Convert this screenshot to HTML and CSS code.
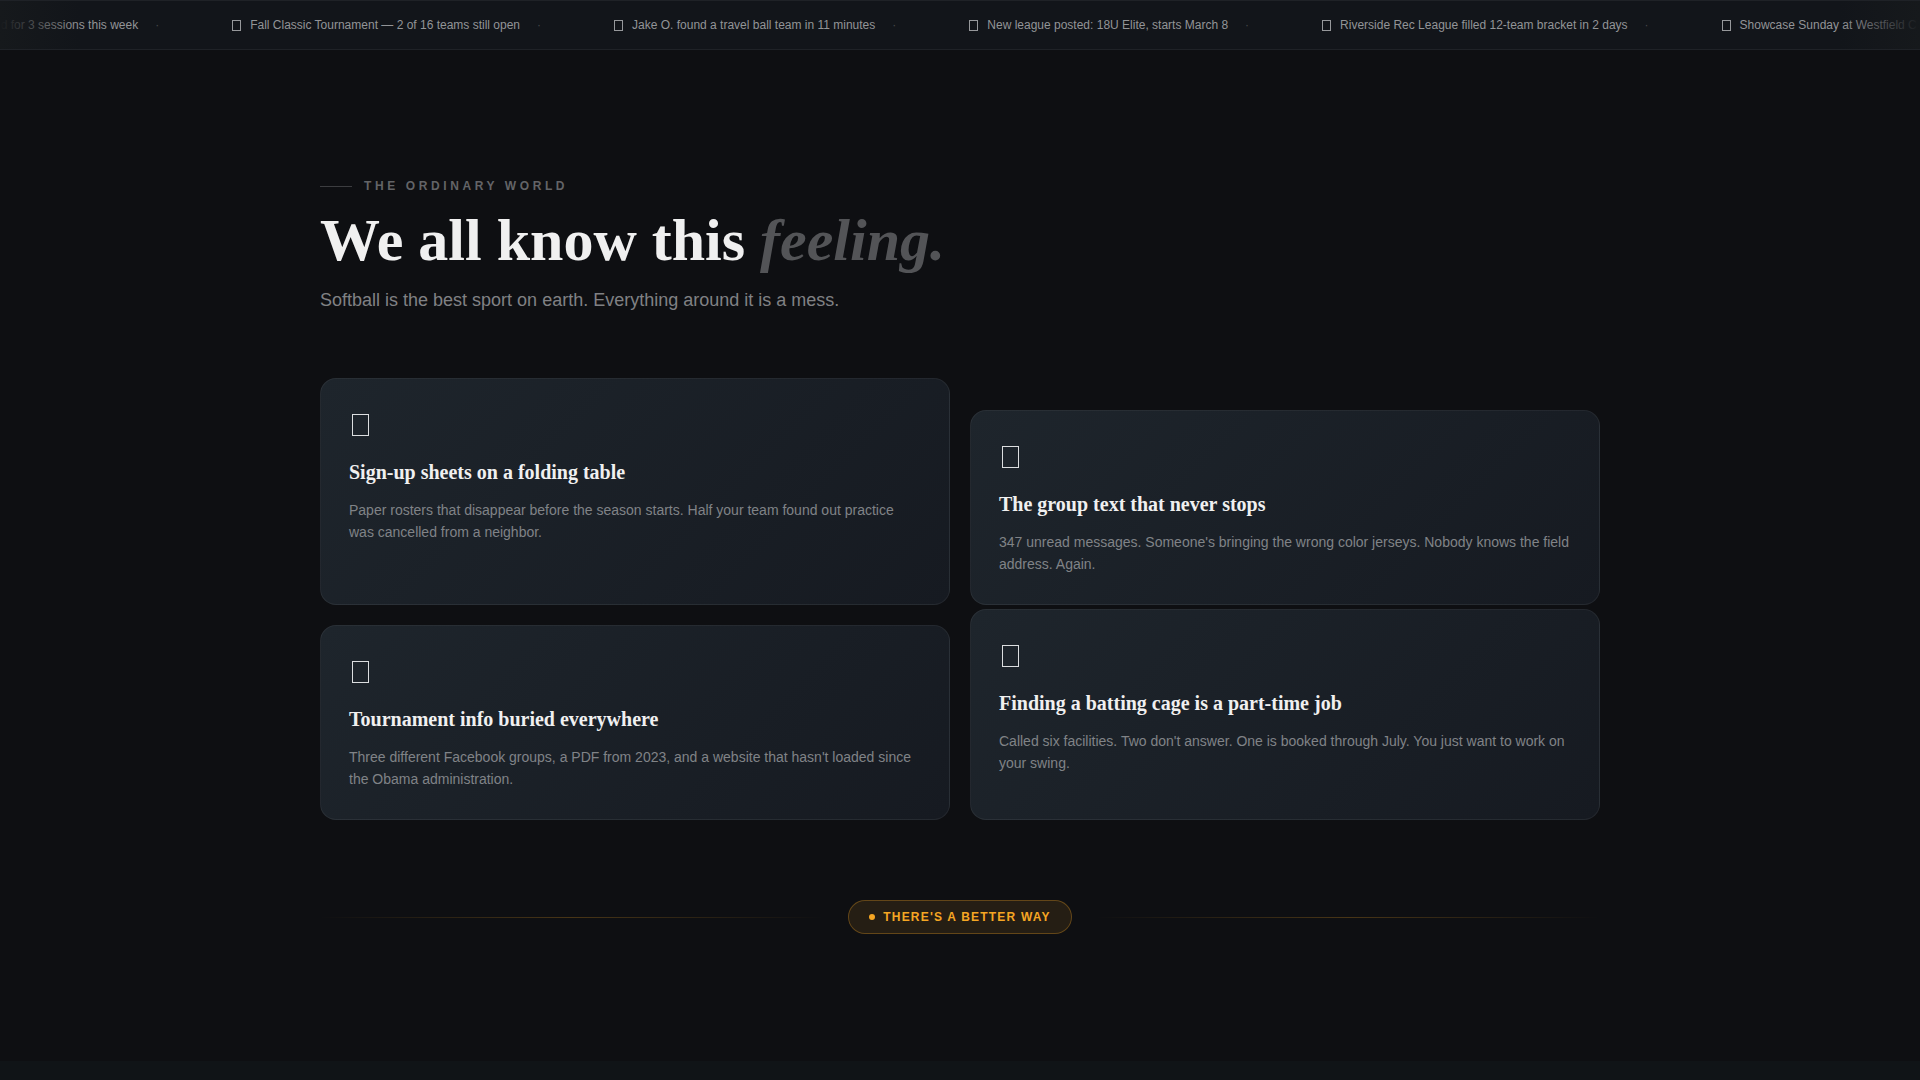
FILE: index.html
```html
<!DOCTYPE html>
<html lang="en">
<head>
<meta charset="utf-8">
<meta name="viewport" content="width=device-width, initial-scale=1">
<title>We all know this feeling.</title>
<link rel="stylesheet" href="styles.css">
</head>
<body>
<div class="ticker">
  <ul class="ticker-track">
    <li class="ticker-item"><span class="ticker-icon"></span><span>Batting cage booked for 3 sessions this week</span><span class="ticker-dot">·</span></li>
    <li class="ticker-item"><span class="ticker-icon"></span><span>Fall Classic Tournament — 2 of 16 teams still open</span><span class="ticker-dot">·</span></li>
    <li class="ticker-item"><span class="ticker-icon"></span><span>Jake O. found a travel ball team in 11 minutes</span><span class="ticker-dot">·</span></li>
    <li class="ticker-item"><span class="ticker-icon"></span><span>New league posted: 18U Elite, starts March 8</span><span class="ticker-dot">·</span></li>
    <li class="ticker-item"><span class="ticker-icon"></span><span>Riverside Rec League filled 12-team bracket in 2 days</span><span class="ticker-dot">·</span></li>
    <li class="ticker-item"><span class="ticker-icon"></span><span>Showcase Sunday at Westfield C</span></li>
  </ul>
</div>

<main class="world">
  <div class="container">
    <header class="intro">
      <p class="eyebrow">The Ordinary World</p>
      <h1 class="headline">We all know this <em>feeling.</em></h1>
      <p class="lede">Softball is the best sport on earth. Everything around it is a mess.</p>
    </header>

    <div class="cards">
      <article class="card">
        <div class="card-icon"></div>
        <h2 class="card-title">Sign-up sheets on a folding table</h2>
        <p class="card-text">Paper rosters that disappear before the season starts. Half your team found out practice was cancelled from a neighbor.</p>
      </article>
      <article class="card card-drop">
        <div class="card-icon"></div>
        <h2 class="card-title">The group text that never stops</h2>
        <p class="card-text">347 unread messages. Someone's bringing the wrong color jerseys. Nobody knows the field address. Again.</p>
      </article>
      <article class="card">
        <div class="card-icon"></div>
        <h2 class="card-title">Tournament info buried everywhere</h2>
        <p class="card-text">Three different Facebook groups, a PDF from 2023, and a website that hasn't loaded since the Obama administration.</p>
      </article>
      <article class="card card-lift">
        <div class="card-icon"></div>
        <h2 class="card-title">Finding a batting cage is a part-time job</h2>
        <p class="card-text">Called six facilities. Two don't answer. One is booked through July. You just want to work on your swing.</p>
      </article>
    </div>

    <div class="bridge">
      <span class="bridge-line"></span>
      <p class="bridge-badge">There's a better way</p>
      <span class="bridge-line"></span>
    </div>
  </div>
</main>
<section class="next"></section>
</body>
</html>
```
FILE: styles.css
```css
:root {
  --bg: #0e0f12;
  --surface: #12151a;
  --line: rgba(255, 255, 255, 0.06);
  --text: #f0f0f0;
  --amber: #f5a623;
  --sans: "Liberation Sans", Arial, sans-serif;
  --serif: "Liberation Serif", "Times New Roman", serif;
}

* {
  box-sizing: border-box;
  margin: 0;
  padding: 0;
}

body {
  display: flex;
  flex-direction: column;
  min-height: 100vh;
  background: var(--bg);
  color: var(--text);
  font-family: var(--sans);
  overflow-x: hidden;
}

/* Ticker */
.ticker {
  position: relative;
  overflow: hidden;
  padding: 16px 0;
  background: var(--surface);
  border-top: 1px solid var(--line);
  border-bottom: 1px solid var(--line);
}

.ticker::before,
.ticker::after {
  content: "";
  position: absolute;
  top: 0;
  bottom: 0;
  width: 80px;
  z-index: 1;
}

.ticker::before {
  left: 0;
  background: linear-gradient(90deg, #16191c, transparent);
}

.ticker::after {
  right: 0;
  background: linear-gradient(270deg, #16191c, transparent);
}

.ticker-track {
  display: flex;
  width: max-content;
  margin-left: -120px;
  list-style: none;
}

.ticker-item {
  display: flex;
  align-items: center;
  gap: 8px;
  padding-right: 73px;
  font-size: 12px;
  line-height: 16px;
  color: #929497;
  white-space: nowrap;
}

.ticker-icon {
  width: 9px;
  height: 11px;
  margin-right: 1px;
  border: 1px solid #96989b;
}

.ticker-dot {
  margin-left: 9px;
  color: #46484b;
}

/* Intro */
.world {
  padding: 128px 40px 127px;
}

.container {
  max-width: 1280px;
  margin: 0 auto;
}

.intro {
  margin-bottom: 64px;
}

.eyebrow {
  display: flex;
  align-items: center;
  gap: 12px;
  margin-bottom: 16px;
  font-size: 12px;
  font-weight: 700;
  line-height: 16px;
  letter-spacing: 0.3em;
  text-transform: uppercase;
  color: #636467;
}

.eyebrow::before {
  content: "";
  width: 32px;
  height: 1px;
  background: #3c3d40;
}

.headline {
  margin-bottom: 16px;
  font-family: var(--serif);
  font-size: 60px;
  font-weight: 700;
  line-height: 60px;
}

.headline em {
  color: #535457;
}

.lede {
  font-size: 18px;
  line-height: 28px;
  color: #808184;
}

/* Cards */
.cards {
  display: grid;
  grid-template-columns: repeat(2, 1fr);
  gap: 20px;
}

.card {
  padding: 28px 28px 29px;
  border: 1px solid var(--line);
  border-radius: 16px;
  background: linear-gradient(135deg, #1e252c, #161a21);
}

.card-drop {
  margin-top: 32px;
}

.card-lift {
  margin-top: -16px;
}

.card-icon {
  width: 17px;
  height: 22px;
  margin: 7px 3px 23px;
  border: 1px solid #dcdee0;
}

.card-title {
  margin-bottom: 14px;
  font-family: var(--serif);
  font-size: 20px;
  font-weight: 700;
  line-height: 26px;
}

.card-text {
  font-size: 14px;
  line-height: 22px;
  color: #808387;
}

/* Bridge to the next section */
.bridge {
  display: flex;
  align-items: center;
  gap: 24px;
  margin-top: 80px;
}

.bridge-line {
  flex: 1;
  height: 1px;
  background: linear-gradient(90deg, transparent, rgba(245, 166, 35, 0.25), transparent);
}

.bridge-badge {
  display: flex;
  align-items: center;
  gap: 8px;
  padding: 8px 20px;
  border: 1px solid rgba(245, 166, 35, 0.3);
  border-radius: 17px;
  background: rgba(245, 166, 35, 0.1);
  color: var(--amber);
  font-size: 12px;
  font-weight: 700;
  line-height: 16px;
  letter-spacing: 0.1em;
  text-transform: uppercase;
}

.bridge-badge::before {
  content: "";
  width: 6px;
  height: 6px;
  border-radius: 50%;
  background: var(--amber);
}

.next {
  flex: 1;
  background: #101417;
}

@media (max-width: 800px) {
  .cards {
    grid-template-columns: 1fr;
  }

  .card-drop,
  .card-lift {
    margin-top: 0;
  }
}
```
